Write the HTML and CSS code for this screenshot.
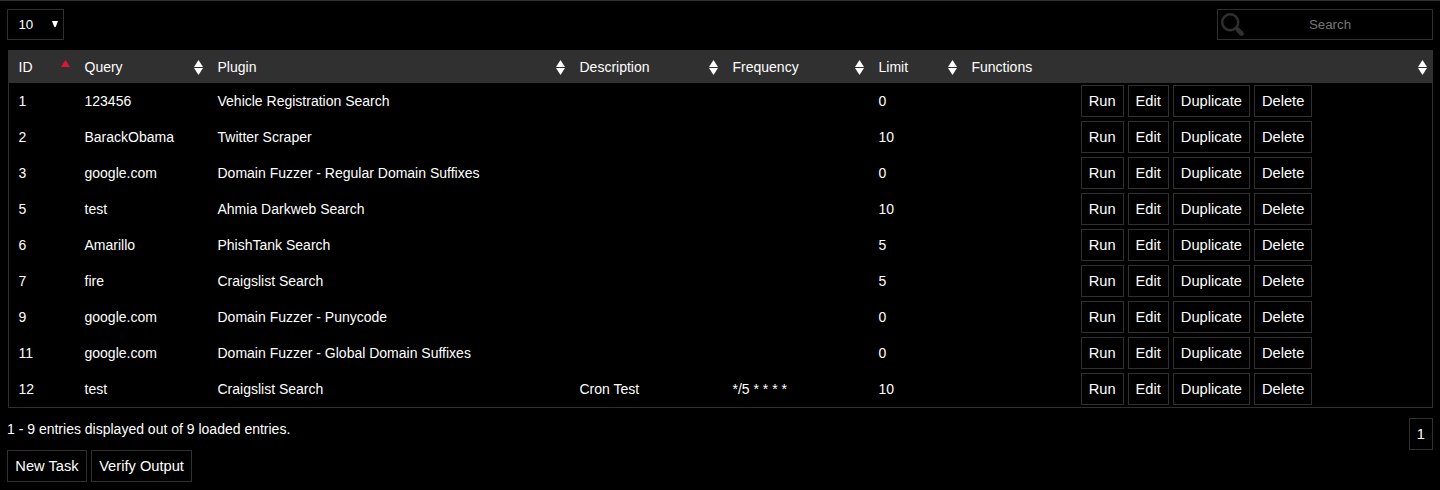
FILE: index.html
```
<!DOCTYPE html>
<html lang="en">
<head>
<meta charset="utf-8">
<title>Tasks</title>
<link rel="stylesheet" href="styles.css">
</head>
<body>
<div class="toolbar">
  <div class="length">10<svg width="6" height="6" viewBox="0 0 6 6"><path d="M0 0H6L3.7 6H2.3Z" fill="#fff"/></svg></div>
  <div class="search">
    <svg width="24" height="24" viewBox="0 0 24 24" fill="none" stroke="#303030"><circle cx="9.2" cy="9.2" r="8" stroke-width="2.4"/><path d="M14.5 14.5L17 17" stroke-width="3"/><path d="M16.7 16.7L20.6 20.6" stroke-width="4.6" stroke-linecap="round"/></svg>
    <input class="search-input" type="text" placeholder="Search">
  </div>
</div>
<div class="table" id="tasks"></div>
<div class="footer">
  <div class="info">1 - 9 entries displayed out of 9 loaded entries.</div>
  <button class="btn">1</button>
</div>
<div class="actions"><button class="btn">New Task</button><button class="btn">Verify Output</button></div>
<script src="tasks.js"></script>
</body>
</html>
```
FILE: styles.css
```
* { box-sizing: border-box; }
body {
  margin: 0;
  height: 490px;
  padding: 8px 7px 0;
  border-top: 1px solid #303030;
  background: #000;
  color: #fff;
  font: 14px/16px "Liberation Sans", Arial, sans-serif;
  overflow: hidden;
}
.toolbar { display: flex; justify-content: space-between; height: 31px; margin-bottom: 10px; }
.length {
  display: flex;
  align-items: center;
  justify-content: space-between;
  width: 57px;
  padding: 0 5px 0 10.4px;
  border: 1px solid #303030;
  font-size: 13.33px;
}
.length svg { margin-top: -1px; }
.search { display: flex; width: 216px; border: 1px solid #303030; }
.search svg { flex: none; margin: 3px 0 0 3px; }
.search-input {
  flex: 1;
  min-width: 0;
  margin-left: -17px;
  padding: 0;
  border: 0;
  background: none;
  color: #fff;
  text-align: center;
  font: 13.33px "Liberation Sans", Arial, sans-serif;
}
.search-input::placeholder { color: #757575; }
.table { width: 1425px; margin-left: 1px; border: 1px solid #303030; border-top: 0; }
.row {
  display: grid;
  grid-template-columns: 66px 133px 362px 153px 146px 93px 1fr;
  align-items: center;
  height: 36px;
}
.head { height: 33px; background: #303030; margin: 0 -1px; padding: 0 1px; }
.cell { padding-left: 9.5px; white-space: nowrap; }
.head .cell { display: flex; justify-content: space-between; padding-right: 5px; }
.sort { display: block; margin-top: 1px; }
.buttons { display: flex; justify-content: center; gap: 4px; padding-right: 1px; }
.btn {
  height: 32px;
  padding: 0 7px;
  border: 1px solid #303030;
  background: #000;
  color: #fff;
  font: 14.67px "Liberation Sans", Arial, sans-serif;
}
.footer { display: flex; justify-content: space-between; height: 42px; padding-top: 10px; }
.info { padding-top: 3px; }
.actions { display: flex; gap: 4px; }
.actions .btn { padding: 0 7.3px; }
```
FILE: tasks.js
```
const columns = ["ID", "Query", "Plugin", "Description", "Frequency", "Limit", "Functions"];
const rows = [
  ["1", "123456", "Vehicle Registration Search", "", "", "0"],
  ["2", "BarackObama", "Twitter Scraper", "", "", "10"],
  ["3", "google.com", "Domain Fuzzer - Regular Domain Suffixes", "", "", "0"],
  ["5", "test", "Ahmia Darkweb Search", "", "", "10"],
  ["6", "Amarillo", "PhishTank Search", "", "", "5"],
  ["7", "fire", "Craigslist Search", "", "", "5"],
  ["9", "google.com", "Domain Fuzzer - Punycode", "", "", "0"],
  ["11", "google.com", "Domain Fuzzer - Global Domain Suffixes", "", "", "0"],
  ["12", "test", "Craigslist Search", "Cron Test", "*/5 * * * *", "10"]
];
const up = fill => `<path d="M4.5 0L9 7H0Z" fill="${fill}"/>`;
const icon = first => `<svg class="sort" width="9" height="15" viewBox="0 0 9 15">${first ? up("#dc143c") : up("#fff") + '<path d="M0 8H9L4.5 15Z" fill="#fff"/>'}</svg>`;
const buttons = ["Run", "Edit", "Duplicate", "Delete"].map(b => `<button class="btn">${b}</button>`).join("");
document.getElementById("tasks").innerHTML =
  `<div class="row head">${columns.map((c, i) => `<div class="cell">${c}${icon(i === 0)}</div>`).join("")}</div>` +
  rows.map(r => `<div class="row">${r.map(c => `<div class="cell">${c}</div>`).join("")}<div class="buttons">${buttons}</div></div>`).join("");
```
